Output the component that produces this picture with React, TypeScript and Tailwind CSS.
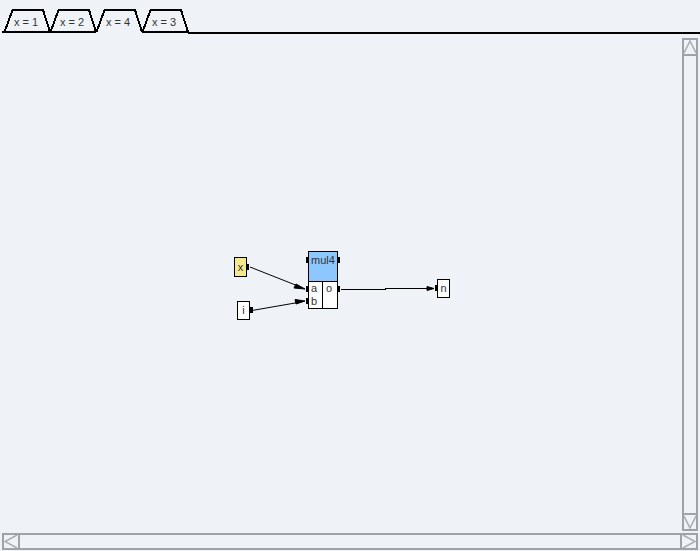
const font = "font-['Liberation_Sans',Arial,sans-serif]";

function Tab({ label, active, first }: { label: string; active?: boolean; first?: boolean }) {
  return (
    <div className="relative w-[46px] h-[33px] shrink-0">
      <svg className="absolute left-[-2px] top-0 overflow-visible" width="48" height="33" viewBox="-2 0 48 33" fill="none" shapeRendering="crispEdges">
        <path d="M0.500 32 L8.500 10 L39 10 L46 32" stroke="#000" strokeWidth="2" />
        {!active && <path d={first ? "M-2 32 H46" : "M0 32 H46"} stroke="#000" strokeWidth="2" />}
      </svg>
      <span className="absolute left-[10px] top-[16px] text-[11px] leading-[13px] text-[#333] whitespace-nowrap">
        {label}
      </span>
    </div>
  );
}

function Port({ className }: { className: string }) {
  return <div className={`absolute h-[6px] bg-black ${className}`} />;
}

function Diagram() {
  return (
    <div className="relative flex-1 h-full overflow-hidden">
      <svg className="absolute left-0 top-0" width="680" height="498" viewBox="0 0 680 498" fill="none">
        <path d="M250 233 L298 252" stroke="#000" />
        <path d="M305 255 L296 250 L294 254 Z" fill="#000" stroke="#000" />
        <path d="M252 276.500 L298 268.500" stroke="#000" />
        <path d="M305 267 L295 265.500 L296 270 Z" fill="#000" stroke="#000" />
        <path d="M341 255.500 H385 V254.500 H428" stroke="#000" shapeRendering="crispEdges" />
        <path d="M434 254.500 L427 252.500 V256.500 Z" fill="#000" stroke="#000" />
      </svg>

      <div className="absolute left-[234px] top-[223px] w-[13px] h-[20px] bg-[#f5e98e] border border-black flex items-center justify-center text-[11px] text-[#333]">
        x
      </div>
      <Port className="left-[247px] top-[230px] w-[2px]" />

      <div className="absolute left-[237px] top-[267px] w-[13px] h-[19px] bg-white border border-black flex items-center justify-center text-[11px] text-[#333]">
        i
      </div>
      <Port className="left-[250px] top-[273px] w-[3px]" />

      <div className="absolute left-[308px] top-[217px] w-[30px] h-[58px] border border-black bg-white flex flex-col">
        <div className="h-[31px] bg-[#8cc8ff] border-b border-black pt-[2px] text-center text-[11px] text-[#333] leading-[13px]">
          mul4
        </div>
        <div className="flex-1 flex text-[11px] leading-[13px] text-[#333]">
          <div className="w-[14px] border-r border-black pl-[2px]">
            <div>a</div>
            <div>b</div>
          </div>
          <div className="pl-[3px]">o</div>
        </div>
      </div>
      <Port className="left-[306px] top-[223px] w-[2px]" />
      <Port className="left-[338px] top-[223px] w-[2px]" />
      <Port className="left-[306px] top-[252px] w-[2px]" />
      <Port className="left-[306px] top-[264px] w-[2px]" />
      <Port className="left-[338px] top-[252px] w-[2px]" />

      <div className="absolute left-[437px] top-[245px] w-[13px] h-[19px] bg-white border border-black flex items-center justify-center text-[11px] text-[#333]">
        n
      </div>
      <Port className="left-[435px] top-[251px] w-[2px]" />
    </div>
  );
}

function VScroll() {
  return (
    <div className="w-[16px] mr-[2px] mt-[4px] mb-[2px] flex flex-col border-2 border-[#9ea3a8]">
      <svg width="12" height="14" viewBox="0 0 12 14" fill="none" className="shrink-0">
        <path d="M0 13 L6 1 L12 13" stroke="#a8adb2" strokeWidth="1.500" />
      </svg>
      <div className="flex-1 border-y-2 border-[#9ea3a8]" />
      <svg width="12" height="14" viewBox="0 0 12 14" fill="none" className="shrink-0">
        <path d="M0 1 L6 13 L12 1" stroke="#a8adb2" strokeWidth="1.500" />
      </svg>
    </div>
  );
}

function HScroll() {
  return (
    <div className="h-[17px] mx-[2px] mb-[1px] shrink-0 flex border-2 border-[#9ea3a8]">
      <svg width="14" height="13" viewBox="0 0 14 13" fill="none" className="shrink-0">
        <path d="M13 0 L1 6.500 L13 13" stroke="#a8adb2" strokeWidth="1.500" />
      </svg>
      <div className="flex-1 border-x-2 border-[#9ea3a8]" />
      <svg width="14" height="13" viewBox="0 0 14 13" fill="none" className="shrink-0">
        <path d="M1 0 L13 6.500 L1 13" stroke="#a8adb2" strokeWidth="1.500" />
      </svg>
    </div>
  );
}

export default function App() {
  return (
    <div className={`w-[700px] h-[551px] bg-[#eff3f8] flex flex-col overflow-hidden ${font}`}>
      <div className="flex items-start pl-[4px] h-[34px] shrink-0">
        <Tab label="x = 1" first />
        <Tab label="x = 2" />
        <Tab label="x = 4" active />
        <Tab label="x = 3" />
        <div className="flex-1 h-[34px] border-b-2 border-black" />
      </div>
      <div className="flex-1 flex min-h-0">
        <Diagram />
        <VScroll />
      </div>
      <HScroll />
    </div>
  );
}
